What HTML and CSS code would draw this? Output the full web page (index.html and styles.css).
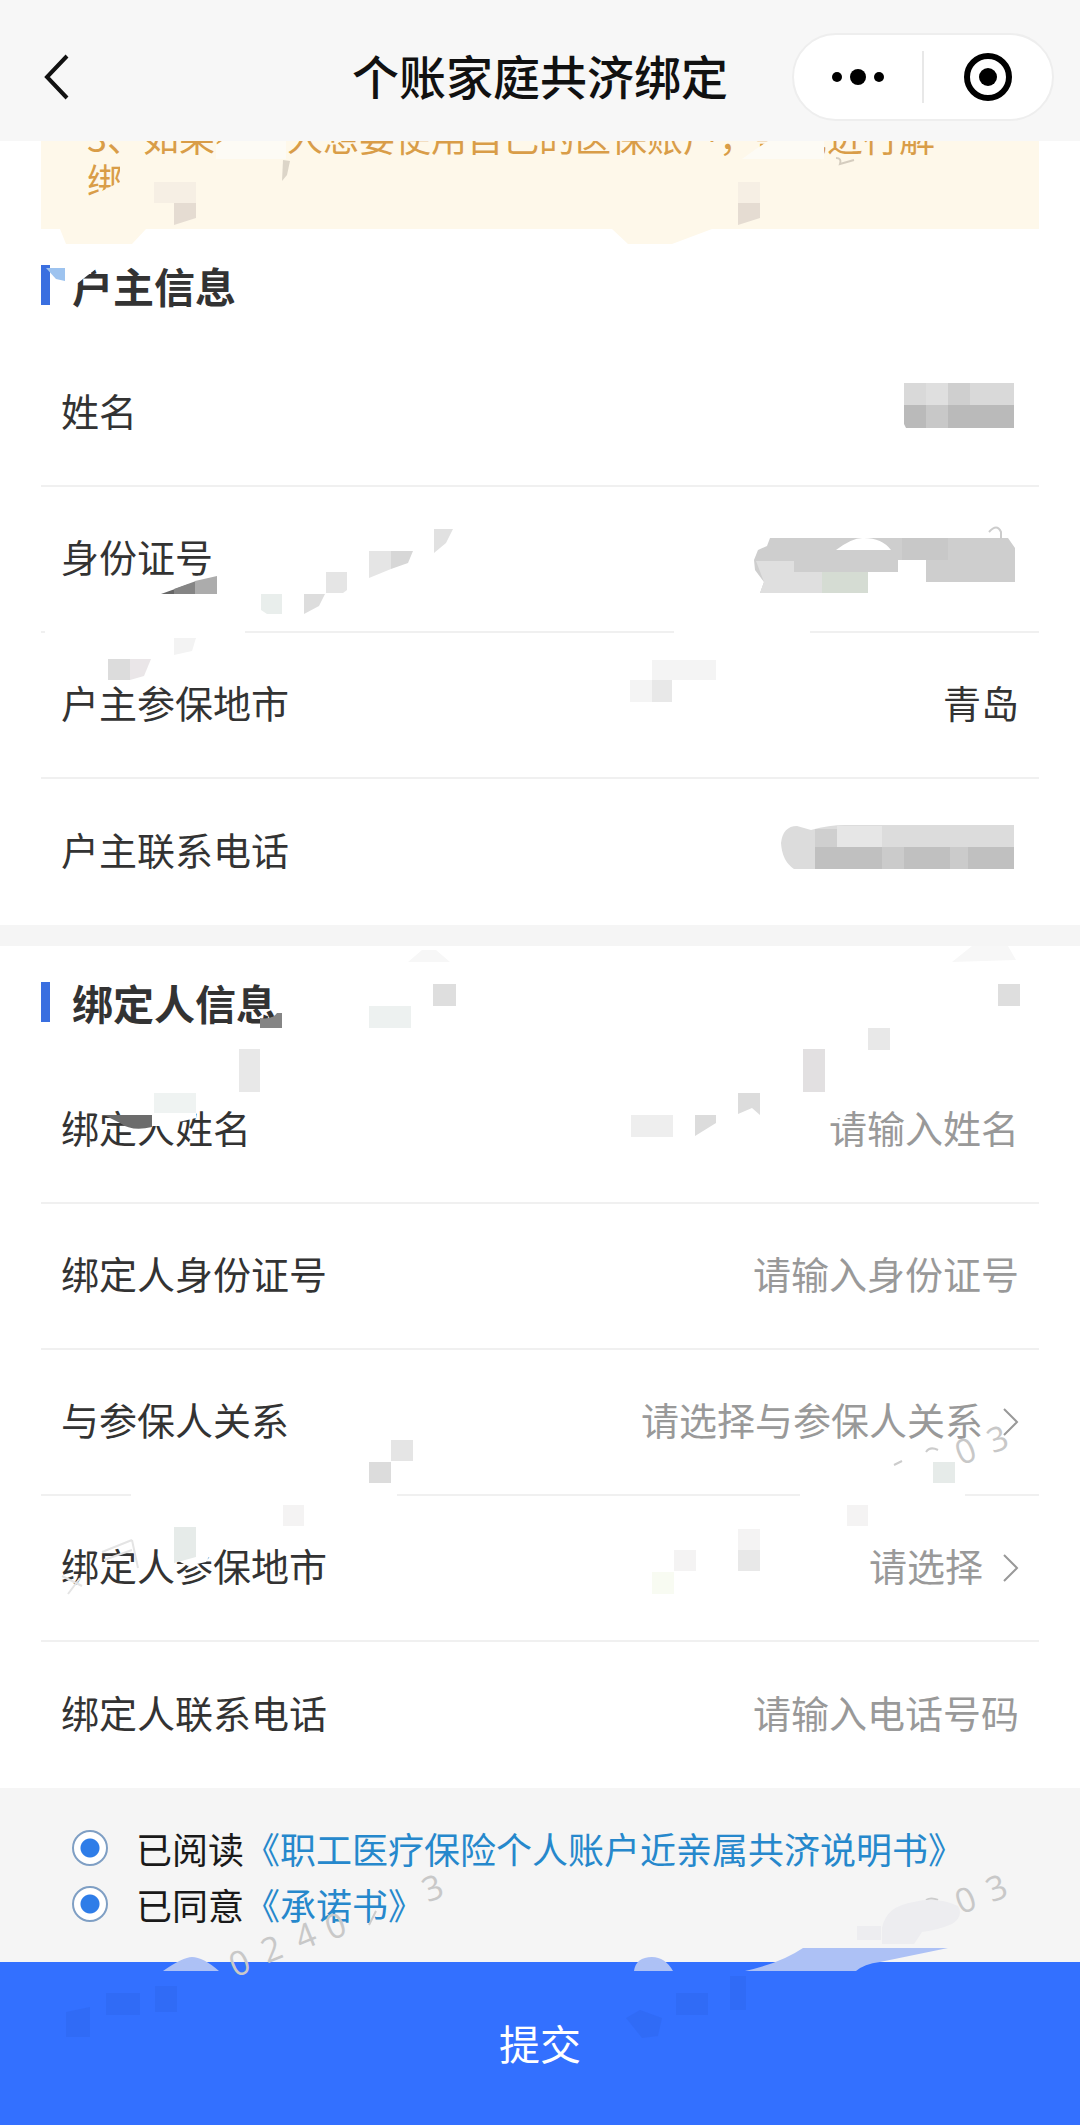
FILE: index.html
```
<!DOCTYPE html>
<html lang="zh-CN">
<head>
  <meta charset="UTF-8">
  <meta name="viewport" content="width=device-width, initial-scale=1">
  <title>个账家庭共济绑定</title>
  <link rel="stylesheet" href="styles.css">
</head>
<body>
  <header class="navbar">
    <button class="back" type="button" aria-label="返回">
      <svg width="28" height="48" viewBox="0 0 28 48"><path d="M25 3 5 24l20 21" fill="none" stroke="#111" stroke-width="4"/></svg>
    </button>
    <h1>个账家庭共济绑定</h1>
    <div class="capsule">
      <button type="button" aria-label="更多">
        <svg width="56" height="52" viewBox="0 0 56 52"><circle cx="7" cy="26" r="5"/><circle cx="28" cy="26" r="8"/><circle cx="49" cy="26" r="5"/></svg>
      </button>
      <button type="button" aria-label="关闭">
        <svg width="52" height="52" viewBox="0 0 52 52"><circle cx="26" cy="26" r="21" fill="none" stroke="#000" stroke-width="6"/><circle cx="26" cy="26" r="9"/></svg>
      </button>
    </div>
  </header>

  <main>
    <p class="notice">3、如果绑定人想要使用自己的医保账户，需先进行解绑</p>

    <form id="bindForm">
      <section class="group">
        <h2>户主信息</h2>
        <dl>
          <div class="row"><dt>姓名</dt><dd></dd></div>
          <div class="row"><dt>身份证号</dt><dd></dd></div>
          <div class="row"><dt>户主参保地市</dt><dd>青岛</dd></div>
          <div class="row"><dt>户主联系电话</dt><dd></dd></div>
        </dl>
      </section>

      <section class="group">
        <h2>绑定人信息</h2>
        <div class="row">
          <label for="name">绑定人姓名</label>
          <input type="text" id="name" placeholder="请输入姓名">
        </div>
        <div class="row">
          <label for="idNo">绑定人身份证号</label>
          <input type="text" id="idNo" placeholder="请输入身份证号">
        </div>
        <div class="row">
          <label for="relation">与参保人关系</label>
          <select id="relation"><option value="">请选择与参保人关系</option></select>
          <svg class="arrow" width="16" height="28" viewBox="0 0 16 28"><path d="m1 1 13 13L1 27"/></svg>
        </div>
        <div class="row">
          <label for="city">绑定人参保地市</label>
          <select id="city"><option value="">请选择</option></select>
          <svg class="arrow" width="16" height="28" viewBox="0 0 16 28"><path d="m1 1 13 13L1 27"/></svg>
        </div>
        <div class="row">
          <label for="phone">绑定人联系电话</label>
          <input type="tel" id="phone" placeholder="请输入电话号码">
        </div>
      </section>
    </form>
  </main>

  <footer>
    <div class="agree">
      <div class="agree-row">
        <input type="radio" id="read" name="read" form="bindForm" checked>
        <label for="read">已阅读</label><a href="#">《职工医疗保险个人账户近亲属共济说明书》</a>
      </div>
      <div class="agree-row">
        <input type="radio" id="promise" name="promise" form="bindForm" checked>
        <label for="promise">已同意</label><a href="#">《承诺书》</a>
      </div>
    </div>
    <button class="submit" type="submit" form="bindForm">提交</button>
  </footer>

  <!-- mosaic over private values and the page watermark -->
  <svg class="mask" viewBox="0 0 1080 2125" aria-hidden="true">
    <!-- notice -->
    <path fill="#fdfbf5" d="M222 141h64v18h-70v-14zM768 141h56v18h-82l14-10z"/>
    <path fill="#fef8ea" d="M88 198l32-16v-20h10v40H88z"/>
    <path fill="#f6efe4" d="M154 182h42v21h-42zM738 182h22v21h-22z"/>
    <path fill="#e5dcd2" d="M174 203h22v15l-22 7zM738 203h22v15l-22 7z"/>
    <path fill="#fef8ea" d="M60 229h86l-14 15H66zM612 229h100l-40 15h-44z"/>
    <path fill="#dcd5c8" d="m283 160 7 1-3 14-5 6z"/>
    <path fill="none" stroke="#d5cdbf" stroke-width="2" d="M836 158q6 0 4 6l14-4"/>
    <!-- first heading -->
    <path fill="#9dc3ef" d="M46 268h19v13l-9-2z"/>
    <path fill="#fff" d="m66 262 34 4-12 9-10 8-10 2z"/>
    <!-- name -->
    <path fill="#d9d9d9" d="M904 383h110v22H904z"/>
    <path fill="#dfdfdf" d="M926 383h22v22h-22z"/>
    <path fill="#cfcfcf" d="M948 383h22v22h-22z"/>
    <path fill="#bababa" d="M904 405h110v23H906l-2-4z"/>
    <path fill="#c8c8c8" d="M926 405h22v23h-22z"/>
    <!-- id number -->
    <path fill="#cecece" d="M770 538h238l7 10v34h-89v-22h-28v12h-30v21H760l4-11-9-12-1-10 4-10 9-4z"/>
    <path fill="#dfdfdf" d="M756 561h38v11h28v21h-62l4-11z"/>
    <path fill="#d5dcd3" d="M822 572h46v21h-46z"/>
    <path fill="#c8c8c8" d="M902 538h46v22h-46z"/>
    <path fill="#fff" d="M836 550q17-13 28-12 18 0 27 12z"/>
    <path fill="none" stroke="#ccc" stroke-width="2" d="M989 532q8-9 12 0v7"/>
    <!-- city and phone -->
    <path fill="#f4f4f4" d="M652 660h64v20h-44v22h-42v-22h22z"/>
    <path fill="#e8e8e8" d="M652 680h20v22h-20z"/>
    <path fill="#dcdcdc" d="M781 843q2-17 16-17l14 4q18-5 34-5h169v44H794q-12-8-13-26z"/>
    <path fill="#cfcfcf" d="M815 829h22v18h-22z"/>
    <path fill="#e6e6e6" d="M837 826h45v21h-45z"/>
    <path fill="#c0c0c0" d="M815 847h67v22h-67zM904 847h46v22h-46zM968 847h46v22h-46z"/>
    <path fill="#cbcbcb" d="M882 847h22v22h-22zM950 847h18v22h-18z"/>
    <path fill="#f7f7f7" d="m408 962 14-12h14l14 12zM952 962l20-16h36l8 14z"/>
    <!-- left blocks -->
    <path fill="#666" d="m161 594 28-10v10z"/>
    <path fill="#858585" d="m174 589 22-8v13h-22z"/>
    <path fill="#acacac" d="m195 581 22-5v18h-22z"/>
    <path fill="#e9eeec" d="M261 594h21v20h-15l-6-4z"/>
    <path fill="#ddd" d="M304 594h21l-6 12-15 8z"/>
    <path fill="#e5e5e5" d="M326 572h21v18l-4 3h-17zM369 551h22v18l-22 9z"/>
    <path fill="#d7d7d7" d="M391 551h22l-5 12-17 6z"/>
    <path fill="#e1e1e1" d="M434 529h19l-7 14-12 10z"/>
    <path fill="#fff" d="M45 630h200v8H45zM674 630h136v8H674z"/>
    <path fill="#dcdcdc" d="M108 659h22v21h-22z"/>
    <path fill="#eae6e8" d="M130 659h21l-7 17-14 4z"/>
    <path fill="#f3f3f3" d="M174 638h22l-4 13-18 4z"/>
    <!-- second heading and row -->
    <path fill="#858585" d="M260 1018q12 2 17-5h5v15h-22z"/>
    <path fill="#dedede" d="M433 984h23v22h-23zM998 984h22v22h-22z"/>
    <path fill="#edf1f0" d="M369 1006h42v22h-42z"/>
    <path fill="#e8e8e8" d="M239 1049h21v43h-21zM868 1028h22v22h-22z"/>
    <path fill="#e2e0e1" d="M803 1049h22v43h-22z"/>
    <path fill="#fff" d="M152 1106h44v12l-34 8h-10zM826 1104h28l-10 14h-18z"/>
    <path fill="#eff3f2" d="M154 1093h42v20h-42z"/>
    <path fill="#6c6c6c" d="M104 1115h48v12q-20 5-32-4z"/>
    <path fill="#dcdcdc" d="M738 1093h22v22l-8-7-14 6zM695 1115h21v8l-21 13z"/>
    <path fill="#eee" d="M631 1115h42v22h-42z"/>
    <!-- relation and city rows -->
    <path fill="#fff" d="M131 1492h266v8H131zM800 1492h165v8H800z"/>
    <path fill="#e5e5e5" d="M391 1440h22v21h-22z"/>
    <path fill="#dcdcdc" d="M369 1462h22v21h-22z"/>
    <path fill="#e6ebe9" d="M933 1462h22v21h-22z"/>
    <path fill="#f4f3f3" d="M283 1505h21v21h-21zM847 1505h21v21h-21zM738 1529h22v21h-22zM674 1550h22v21h-22z"/>
    <path fill="#fff" d="m176 1560 20-12h18l-8 14-18 4z"/>
    <path fill="#e6ebe9" d="M174 1527h22v30l-22 6z"/>
    <path fill="#e8e8e8" d="M738 1550h22v21h-22z"/>
    <path fill="#f8fbf2" d="M652 1572h22v22h-22z"/>
    <path fill="none" stroke="#e4e4e4" stroke-width="2" d="m102 1552 30-12M104 1560l28-10M132 1540l6 28M62 1576l20 10M68 1594l12-16"/>
    <path fill="none" stroke="#ccc" stroke-width="2" d="m894 1465 8-4M926 1452q4-6 12-2M926 1900q5-3 12 0M369 1925l7-14"/>
    <path fill="#ededf0" d="M882 1928q4-22 32-26 22-6 44 4 6 10-6 18-14 6-30 8l-8 12h-32zM857 1926h24v14h-24z"/>
    <g class="digits">
      <text transform="translate(970 1462) rotate(-22)">0</text>
      <text transform="translate(1002 1450) rotate(-22)">3</text>
      <text transform="translate(244 1974) rotate(-22)">0</text>
      <text transform="translate(276 1960) rotate(-22)">2</text>
      <text transform="translate(310 1947) rotate(-22)">4</text>
      <text transform="translate(340 1937) rotate(-22)">0</text>
      <text transform="translate(437 1899) rotate(-22)">3</text>
      <text transform="translate(970 1911) rotate(-22)">0</text>
      <text transform="translate(1001 1899) rotate(-22)">3</text>
    </g>
    <!-- bottom bar -->
    <path fill="#adc1f5" d="M163 1971q20-14 29-14 11 0 27 14zM634 1971q2-14 18-14 13 0 21 14zM745 1971q36-8 58-23h145l-68 14q-16 2-24 9z"/>
    <path fill="#2a60e2" opacity=".3" d="M106 1993h34v22h-34zM155 1986h22v26h-22zM66 2012l24-5v30H66zM676 1993h32v22h-32zM730 1976h16v34h-16zM626 2018l14-8 22 8-4 18-16 2z"/>
  </svg>
</body>
</html>
```
FILE: styles.css
```
* {
  box-sizing: border-box;
}

body {
  margin: 0;
  position: relative;
  background: #fff;
  color: #333;
  font-family: "Noto Sans CJK SC", sans-serif;
  font-size: 38px;
  line-height: 56px;
}

button, input, select {
  font: inherit;
  border: none;
  background: none;
  padding: 0;
  margin: 0;
}

h1, h2, p, dl, dd {
  margin: 0;
}

/* top bar */
.navbar {
  position: relative;
  z-index: 1;
  height: 141px;
  padding: 12px 26px 0 42px;
  display: grid;
  grid-template-columns: 1fr auto 1fr;
  align-items: center;
  background: #f7f7f7;
}

.navbar h1 {
  padding: 0 16px 4px 0;
  font-size: 47px;
  font-weight: 500;
  color: #111;
}

.back {
  justify-self: start;
  display: flex;
}

.capsule {
  justify-self: end;
  display: flex;
  width: 262px;
  height: 88px;
  background: #fff;
  border: 2px solid #eee;
  border-radius: 44px;
}

.capsule button {
  flex: 1;
  display: flex;
  align-items: center;
  justify-content: center;
}

.capsule button + button {
  height: 52px;
  align-self: center;
  border-left: 2px solid #e8e8e8;
}

.notice {
  margin: -30px 41px 0;
  padding: 4px 88px 28px 46px;
  background: #fef8ea;
  color: #d99d48;
  font-size: 36px;
  line-height: 43px;
}

/* form groups */
.group + .group {
  border-top: 21px solid #f5f5f5;
}

.group h2 {
  display: flex;
  align-items: center;
  gap: 22px;
  height: 112px;
  padding: 0 41px;
  font-size: 41px;
  font-weight: 700;
}

.group h2::before {
  content: "";
  width: 9px;
  height: 40px;
  background: #3a6fe0;
}

.row {
  display: flex;
  align-items: center;
  min-height: 146px;
  margin: 0 41px;
  padding: 0 20px 6px;
  border-bottom: 2px solid #f0f0f0;
}

.row:last-child {
  border-bottom: none;
}

.row dd,
.row input,
.row select {
  flex: 1;
  min-width: 0;
  text-align: right;
}

.row input::placeholder {
  color: #999;
  opacity: 1;
}

.row select {
  appearance: none;
  text-align-last: right;
  color: #999;
}

.arrow {
  margin: 6px 0 0 20px;
  fill: none;
  stroke: #999;
  stroke-width: 2;
}

/* agreement */
.agree {
  padding: 32px 72px 30px;
  background: #f5f5f5;
  font-size: 36px;
  color: #1a1a1a;
}

.agree-row {
  display: flex;
  align-items: center;
}

.agree input {
  appearance: none;
  width: 36px;
  height: 36px;
  margin-right: 28px;
  border: 2px solid #7f9fc4;
  border-radius: 50%;
  background: #fff;
}

.agree input:checked {
  background: radial-gradient(circle, #2f7de8 9px, #fff 10px);
}

.agree a {
  color: #2688cc;
  text-decoration: none;
}

.submit {
  display: block;
  width: 100%;
  height: 163px;
  padding-bottom: 4px;
  background: #3370ff;
  color: #fff;
  font-size: 41px;
}

.mask {
  position: absolute;
  top: 0;
  left: 0;
  width: 100%;
  z-index: 2;
  pointer-events: none;
}

.digits {
  fill: #c8c8c8;
  font-family: "Open Sans", sans-serif;
  font-size: 34px;
  text-anchor: middle;
}
```
